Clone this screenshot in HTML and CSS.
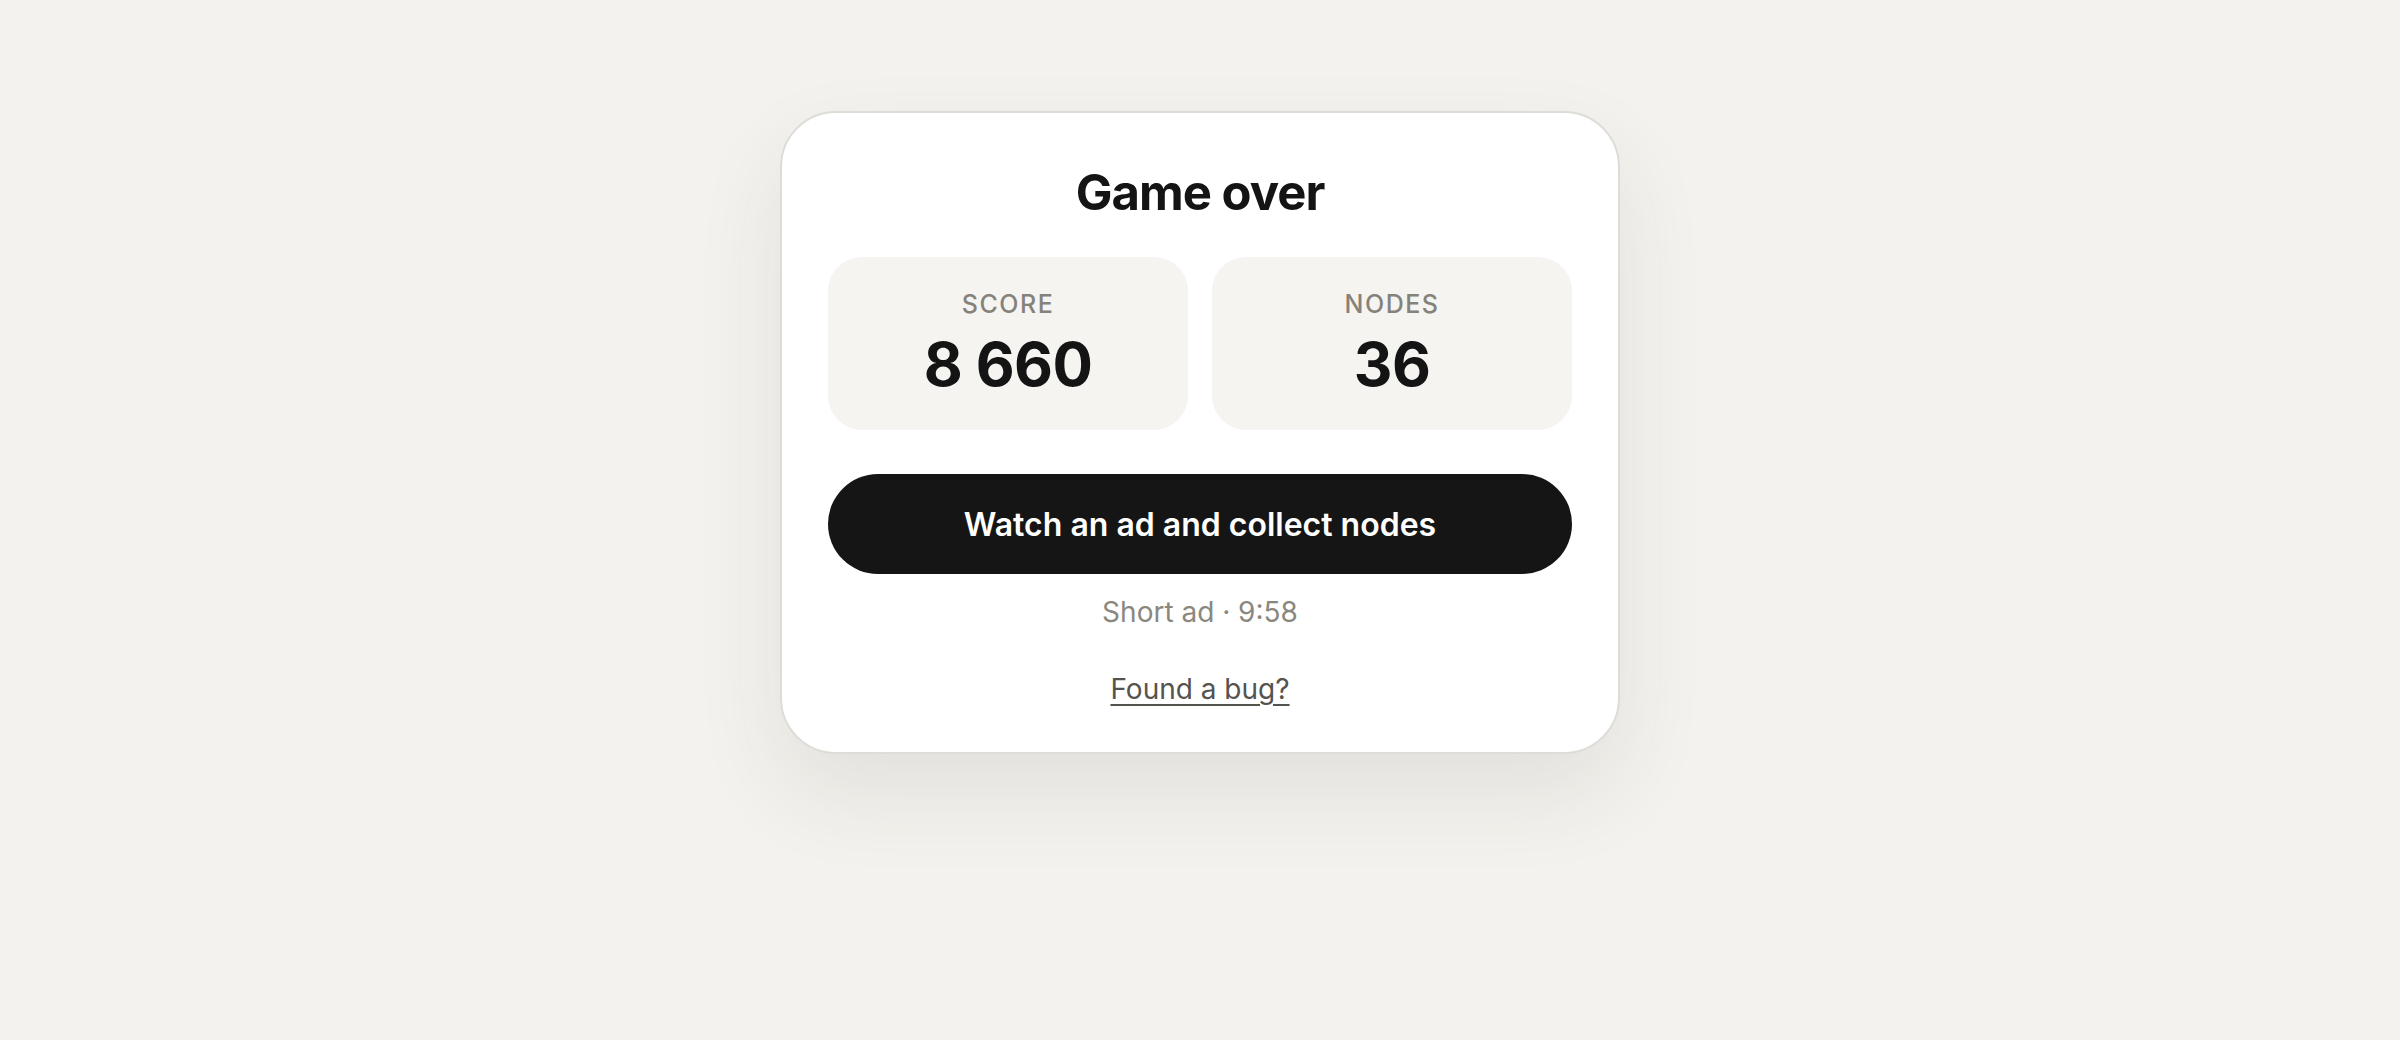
FILE: index.html
```html
<!DOCTYPE html>
<html lang="en">

<head>
  <meta charset="UTF-8">
  <meta name="viewport" content="width=device-width, initial-scale=1">
  <title>Game over</title>
  <link rel="stylesheet" href="styles.css">
</head>

<body>
  <div class="screen">
    <div class="card">
      <h1 class="title">Game over</h1>

      <div class="stats">
        <div class="stat">
          <div class="stat-label">SCORE</div>
          <div class="stat-value">8 660</div>
        </div>
        <div class="stat">
          <div class="stat-label">NODES</div>
          <div class="stat-value">36</div>
        </div>
      </div>

      <button class="ad-button">Watch an ad and collect nodes</button>
      <p class="ad-note">Short ad · 9:58</p>

      <a class="bug-link" href="#">Found a bug?</a>
    </div>
  </div>
</body>

</html>
```

FILE: styles.css
```css
body {
  margin: 0;
  background-color: #f3f2ee;
  font-family: Inter, "Noto Sans", sans-serif;
  color: #141414;
}

.screen {
  display: flex;
  justify-content: center;
  padding-top: 111px;
  min-height: 1040px;
  box-sizing: border-box;
}

.card {
  width: 840px;
  box-sizing: border-box;
  background-color: #fff;
  border: 2px solid #dedcd7;
  border-radius: 56px;
  padding: 51px 46px 46px;
  display: flex;
  flex-direction: column;
  align-items: center;
  text-align: center;
  box-shadow: 0 40px 90px rgba(60, 55, 40, 0.09);
  align-self: flex-start;
}

.title {
  margin: 0;
  font-size: 49px;
  font-weight: 700;
  letter-spacing: -0.02em;
  line-height: 58px;
}

.stats {
  display: flex;
  gap: 24px;
  width: 100%;
  margin-top: 35px;
}

.stat {
  flex: 1;
  background-color: #f5f4f1;
  border-radius: 34px;
  padding: 33px 0 36px;
}

.stat-label {
  font-size: 25px;
  line-height: 29px;
  font-weight: 500;
  letter-spacing: 0.06em;
  color: #85827a;
}

.stat-value {
  margin-top: 15px;
  font-size: 60px;
  line-height: 60px;
  font-weight: 700;
  letter-spacing: -0.01em;
}

.ad-button {
  margin-top: 44px;
  width: 100%;
  height: 100px;
  border: none;
  border-radius: 50px;
  background-color: #151515;
  color: #fff;
  font-family: inherit;
  font-size: 32px;
  font-weight: 600;
}

.ad-note {
  margin: 22px 0 0;
  font-size: 28px;
  line-height: 32px;
  color: #8a877f;
}

.bug-link {
  margin-top: 44px;
  font-size: 28px;
  line-height: 34px;
  color: #55534e;
  text-underline-offset: 5px;
}
```
